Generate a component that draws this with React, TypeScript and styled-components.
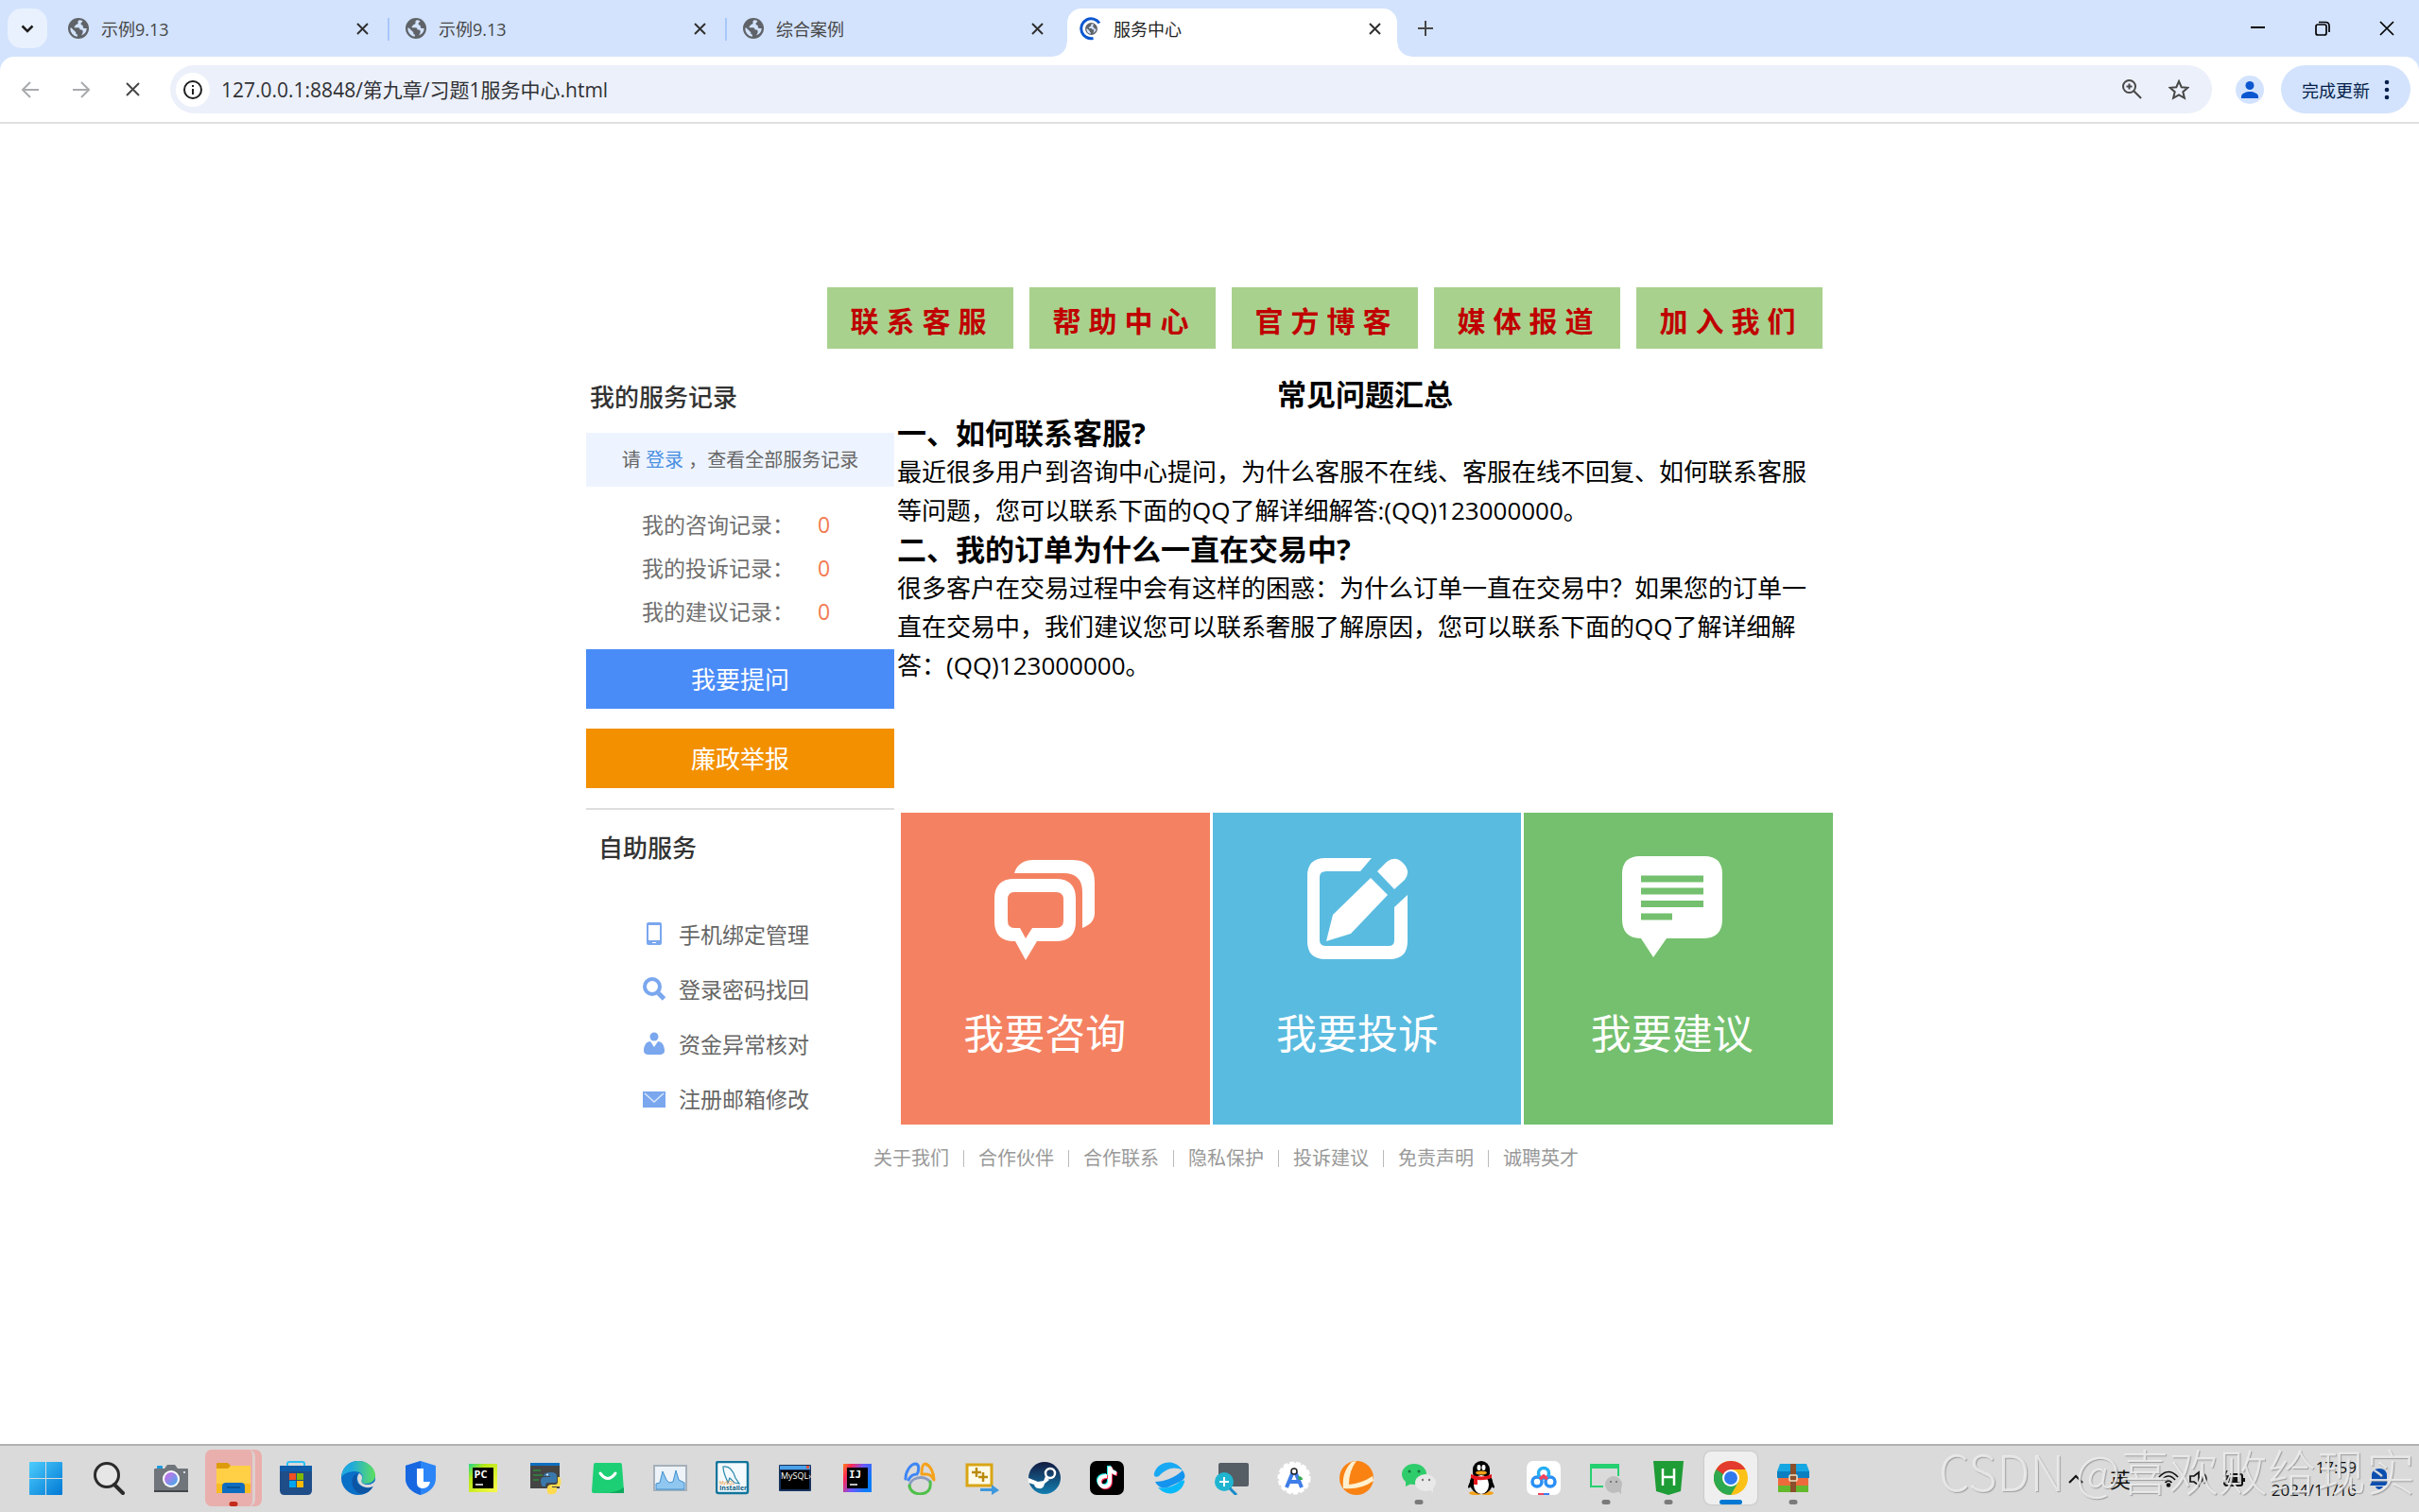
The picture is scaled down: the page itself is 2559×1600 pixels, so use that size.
import React from "react";
import styled, { createGlobalStyle } from "styled-components";

const sans = `"Open Sans", "Noto Sans CJK SC", sans-serif`;

const GlobalStyle = createGlobalStyle`
  *, *::before, *::after { box-sizing: border-box; }
  body { margin: 0; background: #fff; font-family: ${sans}; color: #000; }
  h1, h2, h3, p, ul { margin: 0; padding: 0; }
  ul { list-style: none; }
  a { color: inherit; text-decoration: none; }
  button, input { font: inherit; color: inherit; border: 0; padding: 0; background: none; }
  svg { display: block; }
`;

const Screen = styled.div`
  min-height: 100vh;
  display: flex;
  flex-direction: column;
`;

/* ---------- browser frame ---------- */

const BrowserHeader = styled.header`
  background: #d3e3fd;
`;

const TabStrip = styled.div`
  height: 60px;
  display: flex;
  align-items: flex-start;
  padding-left: 8px;
`;

const TabSearch = styled.button`
  width: 42px;
  height: 42px;
  margin: 9px 4px 0 0;
  border-radius: 15px;
  background: #e9f1fe;
  display: grid;
  place-items: center;
`;

const Tabs = styled.div`
  display: flex;
`;

const TabSlot = styled.div<{ $divider?: boolean }>`
  position: relative;
  width: 357px;
  padding: 9px 4px 0;
  &::after {
    content: "";
    display: ${(p) => (p.$divider ? "block" : "none")};
    position: absolute;
    right: -1px;
    top: 19px;
    width: 2px;
    height: 24px;
    background: #a8c7fa;
  }
`;

const Tab = styled.div<{ $active?: boolean }>`
  position: relative;
  height: 51px;
  padding: 0 14px 9px;
  display: flex;
  align-items: center;
  gap: 13px;
  font-size: 18px;
  color: ${(p) => (p.$active ? "#1f1f1f" : "#474747")};
  background: ${(p) => (p.$active ? "#fff" : "transparent")};
  border-radius: 15px 15px 0 0;
  &::before, &::after {
    content: "";
    display: ${(p) => (p.$active ? "block" : "none")};
    position: absolute;
    bottom: 0;
    width: 15px;
    height: 15px;
  }
  &::before {
    left: -15px;
    background: radial-gradient(circle at 0 0, transparent 14px, #fff 15px);
  }
  &::after {
    right: -15px;
    background: radial-gradient(circle at 100% 0, transparent 14px, #fff 15px);
  }
`;

const TabTitle = styled.span`
  flex: 1;
`;

const TabClose = styled.button`
  width: 20px;
  height: 20px;
  display: grid;
  place-items: center;
`;

const NewTab = styled.button`
  width: 36px;
  height: 42px;
  margin: 9px 0 0 8px;
  display: grid;
  place-items: center;
`;

const WindowControls = styled.div`
  margin-left: auto;
  display: flex;
`;

const WindowButton = styled.button`
  width: 68px;
  height: 60px;
  display: grid;
  place-items: center;
`;

const Toolbar = styled.div`
  display: flex;
  align-items: center;
  padding: 9px 9px 9px 5px;
  background: #fff;
  border-radius: 15px 15px 0 0;
  border-bottom: 2px solid #dfe0e2;
`;

const ToolButton = styled.button<{ $w: number }>`
  width: ${(p) => p.$w}px;
  height: 50px;
  display: grid;
  place-items: center;
`;

const Omnibox = styled.div`
  flex: 1;
  height: 51px;
  margin-left: 13px;
  padding: 0 11px 0 6px;
  display: flex;
  align-items: center;
  border-radius: 26px;
  background: #ecf0fa;
`;

const SiteInfo = styled.button`
  width: 36px;
  height: 36px;
  border-radius: 50%;
  background: #fff;
  display: grid;
  place-items: center;
`;

const UrlInput = styled.input`
  flex: 1;
  height: 36px;
  padding: 0 0 2px 12px;
  font-size: 21px;
  color: #303134;
  outline: none;
`;

const Profile = styled.button`
  width: 30px;
  height: 30px;
  margin: 0 18px 0 25px;
  border-radius: 50%;
  background: #d3e3fd;
  overflow: hidden;
`;

const UpdateButton = styled.button`
  height: 51px;
  padding: 0 15px 0 22px;
  display: flex;
  align-items: center;
  gap: 8px;
  border-radius: 26px;
  background: #d3e3fd;
  color: #041e49;
  font-size: 18px;
`;

/* ---------- web page ---------- */

const Viewport = styled.main`
  flex: 1;
  padding: 173px 24px 40px;
`;

const Page = styled.div`
  max-width: 1319px;
  margin: 0 auto;
`;

const TopNav = styled.nav`
  display: flex;
  gap: 17px;
  padding-left: 255px;
`;

const TopNavLink = styled.a`
  width: 197px;
  height: 65px;
  padding: 2px 0 0 4px;
  display: flex;
  align-items: center;
  justify-content: center;
  background: #a9d18e;
  color: #c00000;
  font-size: 30px;
  font-weight: 700;
  letter-spacing: 8px;
`;

const Columns = styled.div`
  display: grid;
  grid-template-columns: 326px 1fr;
  gap: 3px;
  margin-top: 28px;
`;

const SideTitle = styled.h2<{ $indent: number }>`
  padding-left: ${(p) => p.$indent}px;
  font-size: 26px;
  line-height: 46px;
  font-weight: 500;
  color: #333;
`;

const LoginNotice = styled.p`
  margin-top: 15px;
  height: 57px;
  line-height: 57px;
  text-align: center;
  font-size: 20px;
  color: #666;
  background: #eef4ff;
  a { color: #4a90e2; }
`;

const Records = styled.ul`
  margin: 17px 0;
  padding-left: 59px;
`;

const RecordRow = styled.li`
  display: grid;
  grid-template-columns: 186px auto;
  font-size: 23px;
  line-height: 46px;
  color: #707070;
`;

const RecordCount = styled.span`
  color: #f27b52;
`;

const SideButton = styled.button<{ $color: string }>`
  display: block;
  width: 100%;
  height: 63px;
  margin-bottom: 21px;
  padding-bottom: 2px;
  font-size: 26px;
  color: #fff;
  background: ${(p) => p.$color};
`;

const SelfService = styled.section`
  padding-top: 17px;
  border-top: 2px solid #dedede;
`;

const ServiceList = styled.ul`
  margin-top: 39px;
  padding-left: 58px;
`;

const ServiceLink = styled.a`
  display: flex;
  align-items: center;
  gap: 12px;
  height: 58px;
  font-size: 23px;
  color: #666;
`;

const Faq = styled.article`
  font-size: 26px;
  line-height: 41px;
`;

const FaqTitle = styled.h1`
  font-size: 31px;
  line-height: 41px;
  text-align: center;
`;

const FaqQuestion = styled.h2`
  font-size: 31px;
  line-height: 41px;
`;

const FaqAnswer = styled.p`
  padding-right: 8px;
`;

const Cards = styled.div`
  display: grid;
  grid-template-columns: repeat(3, 1fr);
  gap: 3px;
  margin-top: 135px;
  padding-left: 4px;
`;

const Card = styled.a<{ $color: string; $inset: number }>`
  height: 330px;
  padding-top: 46px;
  padding-right: ${(p) => p.$inset}px;
  display: flex;
  flex-direction: column;
  align-items: center;
  gap: 38px;
  background: ${(p) => p.$color};
  color: #fff;
  font-size: 43px;
  line-height: 60px;
`;

const Footer = styled.footer`
  margin-top: 20px;
  padding-left: 304px;
  display: flex;
  font-size: 20px;
  line-height: 30px;
  color: #999;
`;

const FooterLink = styled.a`
  display: flex;
  align-items: center;
  &:not(:last-child)::after {
    content: "";
    width: 1px;
    height: 18px;
    margin: 0 15px;
    background: #bbb;
  }
`;

/* ---------- taskbar ---------- */

const Taskbar = styled.footer`
  position: relative;
  height: 72px;
  display: flex;
  padding: 0 18px 0 16px;
  background: #dadada;
  border-top: 2px solid #b0b0b0;
`;

const Apps = styled.div`
  display: flex;
`;

const AppButton = styled.button<{ $state?: string }>`
  position: relative;
  width: ${(p) => (p.$state === "alert" ? 60 : 56)}px;
  height: ${(p) => (p.$state === "alert" ? 60 : 56)}px;
  margin: ${(p) => (p.$state === "alert" ? "4px 3px" : "6px 5px")};
  display: grid;
  place-items: center;
  border-radius: 7px;
  background: ${(p) =>
    p.$state === "alert" ? "#e9afac" : p.$state === "active" ? "#efefef" : "transparent"};
  box-shadow: ${(p) => (p.$state === "active" ? "0 0 2px #aaa" : "none")};
  &::before {
    content: "";
    display: ${(p) => (p.$state === "alert" ? "block" : "none")};
    position: absolute;
    inset: 0 7px 0 0;
    border-right: 3px solid #dcd0cf;
    border-radius: 7px;
  }
  &::after {
    content: "";
    display: ${(p) => (p.$state ? "block" : "none")};
    position: absolute;
    bottom: 0;
    left: 50%;
    transform: translateX(-50%);
    width: ${(p) => (p.$state === "active" ? 24 : 9)}px;
    height: 5px;
    border-radius: 3px;
    background: ${(p) =>
      p.$state === "active" ? "#0078d4" : p.$state === "alert" ? "#c42b1c" : "#7a7a7a"};
  }
`;

const Tray = styled.div`
  margin-left: auto;
  display: flex;
  align-items: center;
  color: #111;
`;

const TrayButton = styled.button<{ $w: number }>`
  width: ${(p) => p.$w}px;
  height: 60px;
  display: grid;
  place-items: center;
  font-size: 22px;
  line-height: 30px;
`;

const StatusButton = styled.button`
  height: 60px;
  padding-left: 12px;
  display: grid;
  grid-template-columns: 32px 32px 42px;
  place-items: center;
`;

const Clock = styled.button`
  width: 109px;
  text-align: right;
  font-size: 17px;
  line-height: 24px;
`;

const Watermark = styled.div`
  position: absolute;
  right: 4px;
  top: 0;
  font-family: "Noto Sans CJK SC", sans-serif;
  font-size: 52px;
  font-weight: 300;
  line-height: 52px;
  white-space: nowrap;
  color: rgba(240, 240, 240, 0.85);
  text-shadow: 1px 1px 1px rgba(120, 120, 120, 0.6);
  pointer-events: none;
`;

/* ---------- drawings ---------- */

const Globe = ({ size = 22 }: { size?: number }) => (
  <svg width={size} height={size} viewBox="0 0 22 22">
    <circle cx="11" cy="11" r="11" fill="#5f6368" />
    <path d="M12 2.200c-1.400.4-1.800 1.600-1.500 2.800.3 1.200-.6 1.600-1.800 1.900-1 .3-.7 1.500-1.700 1.800-.9.300-.6 1.300.4 1.500h3.400c1.400 0 1.800 1.200 1.800 2.200h1.600c1.200 0 1.600 1.200 1.400 2.600-.2 1.400-.9 2.600-1.600 3.500A8.900 8.900 0 0 0 19.800 11h-2.300c-1.500 0-2-1-1.700-2.200.2-.8-.4-1-1.300-1.300-1.500-.5-1.200-2.400.3-2.900l.6-1.500A9 9 0 0 0 12 2.200zM2.300 10.500a8.900 8.900 0 0 0 7.600 9.300v-2.300c-1.500-.3-1.900-1.200-1.600-2.300l-4.800-4.700z" fill="#d3e3fd" />
  </svg>
);

const LoadingGlobe = () => (
  <svg width="22" height="22" viewBox="0 0 22 22" overflow="visible">
    <g transform="translate(5 5)"><Globe size={13} /></g>
    <path d="M20 5.500A10.500 10.500 0 1 0 13.500 21.500" fill="none" stroke="#0b57d0" strokeWidth="3" />
  </svg>
);

const Cross = ({ size = 11, color = "#303030", w = 2 }: { size?: number; color?: string; w?: number }) => (
  <svg width={size} height={size} viewBox={`0 0 ${size} ${size}`} stroke={color} strokeWidth={w}>
    <path d={`M1 1L${size - 1} ${size - 1}M${size - 1} 1L1 ${size - 1}`} />
  </svg>
);

const Arrow = ({ flip }: { flip?: boolean }) => (
  <svg width="18" height="18" viewBox="0 0 18 18" fill="none" stroke="#a9abae" strokeWidth="2">
    <path d={flip ? "M0 9h16M9 1l8 8-8 8" : "M18 9H2M9 1L1 9l8 8"} />
  </svg>
);

const ServiceIcons = [
  <svg key="phone" width="28" height="28" viewBox="0 0 28 28">
    <rect x="6" y="2" width="16" height="24" rx="2" fill="#7aa7ee" />
    <rect x="8" y="5" width="12" height="16" fill="#fff" />
    <rect x="12" y="23" width="4" height="1" fill="#fff" />
  </svg>,
  <svg key="find" width="28" height="28" viewBox="0 0 28 28" fill="none" stroke="#7aa7ee">
    <circle cx="12" cy="12" r="8" strokeWidth="4" />
    <path d="M18.500 19l6 6" strokeWidth="5" />
  </svg>,
  <svg key="person" width="28" height="28" viewBox="0 0 28 28" fill="#7aa7ee">
    <circle cx="14" cy="7" r="4.500" />
    <path d="M3 22c0-6 3-10 7-10l4 6 4-6c4 0 7 4 7 10 0 3-3 4-5 4H8c-2 0-5-1-5-4z" />
  </svg>,
  <svg key="mail" width="28" height="28" viewBox="0 0 28 28">
    <rect x="2" y="7" width="24" height="17" fill="#7aa7ee" />
    <path d="M4 9l10 9 10-9" fill="none" stroke="#dce8fb" strokeWidth="1.500" />
  </svg>,
];

const ConsultIcon = () => (
  <svg width="108" height="120" viewBox="0 0 108 120">
    <path d="M22 18C25 8 33 4 42 4H84Q107 4 107 28V60C107 68 102 73 94 76V38Q94 18 74 18Z" fill="#fff" />
    <path fillRule="evenodd" d="M22 24H66Q87 24 87 45V69Q87 90 66 90H46L34 110L23 90H22Q1 90 1 69V45Q1 24 22 24ZM22 38Q15 38 15 46V68Q15 76 22 76H28L34 87L41 76H66Q74 76 74 68V46Q74 38 66 38Z" fill="#fff" />
  </svg>
);

const ComplainIcon = () => (
  <svg width="108" height="120" viewBox="0 0 108 120" fill="#fff">
    <path d="M69 2H20Q1 2 1 21V90Q1 109 20 109H88Q107 109 107 90V41L93 54V89Q93 95 87 95H21Q14 95 14 89V22Q14 16 21 16H57Z" />
    <path d="M68 23L86 41L47 82L21 90L28 62Z" />
    <path d="M75 16L85 6Q94-1 102 7Q111 16 104 25L93 35Z" />
  </svg>
);

const SuggestIcon = () => (
  <svg width="108" height="120" viewBox="0 0 108 120">
    <path d="M20 0H88Q107 0 107 19V67Q107 86 88 87H48L34 107L21 87H20Q1 86 1 67V19Q1 0 20 0Z" fill="#fff" />
    <path d="M21 24H87M21 37H87M21 50.500H87M21 64H54" stroke="#74c06e" strokeWidth="7" />
  </svg>
);

const I = ({ children }: { children: React.ReactNode }) => (
  <svg width="36" height="36" viewBox="0 0 36 36">{children}</svg>
);

type AppItem = { name: string; state?: string; icon: React.ReactNode };

const apps: AppItem[] = [
  { name: "开始", icon: <I><defs><linearGradient id="win" x1="0" y1="0" x2="1" y2="1"><stop offset="0" stopColor="#4ccdfd" /><stop offset="1" stopColor="#0078d4" /></linearGradient></defs><path d="M0 2q0-1 1-1h16v17H0zM18 1h16q1 0 1 1v16H18zM0 19h17v17H1q-1 0-1-1zM18 19h17v16q0 1-1 1H18z" fill="url(#win)" /></I> },
  { name: "搜索", icon: <I><circle cx="16" cy="15" r="12.500" fill="#e6e6e6" stroke="#2b2b2b" strokeWidth="3" /><path d="M24 25l9 9" stroke="#2b2b2b" strokeWidth="4" strokeLinecap="round" /></I> },
  { name: "相机", icon: <I><rect x="3" y="5" width="6" height="4" rx="1" fill="#1a9be0" /><path d="M1 8h10l3-4h8l3 4h10q1 0 1 1v23q0 1-1 1H1q-1 0-1-1V9q0-1 1-1z" fill="#70757b" /><path d="M0 31h36v2H0z" fill="#43474b" /><circle cx="18" cy="19" r="9" fill="#fff" /><defs><linearGradient id="lens" x1="0" y1="0" x2="1" y2="1"><stop offset="0.3" stopColor="#b07be8" /><stop offset="1" stopColor="#35b1ec" /></linearGradient></defs><circle cx="18" cy="19" r="7" fill="url(#lens)" /><circle cx="32" cy="12" r="1" fill="#fff" /></I> },
  { name: "文件资源管理器", state: "alert", icon: <I><path d="M0 3q0-1 1-1h11l3 3v5H0z" fill="#dd9b0c" /><path d="M0 8h12l3-3h20q1 0 1 1v28H0z" fill="#ffcf45" /><path d="M0 24h36v10H0z" fill="#f9bb1f" /><path d="M6 34V27q0-4 4-4h16q4 0 4 4v7z" fill="#0f6cc0" /><path d="M11 28h14" stroke="#0a4a86" strokeWidth="1.500" /></I> },
  { name: "Microsoft Store", icon: <I><path d="M9 8V3q0-2 2-2h14q2 0 2 2v5" fill="none" stroke="#2cc0f5" strokeWidth="2" /><path d="M1 5h34v26q0 5-5 5H6q-5 0-5-5z" fill="#1e4d88" /><path d="M1 5h34v6H1z" fill="#0f5ca8" /><path d="M11 13h7v7h-7z" fill="#f25022" /><path d="M19 13h7v7h-7z" fill="#7fba00" /><path d="M11 21h7v7h-7z" fill="#00a4ef" /><path d="M19 21h7v7h-7z" fill="#ffb900" /></I> },
  { name: "Microsoft Edge", icon: <I><defs><linearGradient id="edge" x1="0" y1="0" x2="1" y2="0"><stop offset="0.300" stopColor="#1fa9dd" /><stop offset="1" stopColor="#5fe05e" /></linearGradient></defs><circle cx="18" cy="18" r="18" fill="#0a6fc7" /><path d="M0 17C1 7 8 0 18 0c11 0 18 8 18 15 0 6-5 9-9 9-5 0-7-2-5-5 2-4-2-8-7-8-6 0-12 2-15 6z" fill="url(#edge)" /><path d="M14 15c-5 5-3 17 7 20 6 0 11-4 13-9-8 4-19 1-18-8 0-2 1-4 2-5z" fill="#0c55a4" /><path d="M19 13c3 2 4 4 2.500 7-1 3 2 5 7 5 3 0 6-2 7.500-4v5l-2 1c-7 3-17 0-17-9q0-3 2-5z" fill="#dadada" /></I> },
  { name: "电脑管家", icon: <I><path d="M18 0l16 5v13c0 9-6 15-16 18C8 33 2 27 2 18V5z" fill="#2b85f7" /><path d="M18 0L2 5v13c0 9 6 15 16 18z" fill="#1767e0" /><path d="M14 8h7v14h7q-1 6-7 7-7 0-7-6z" fill="#fff" /></I> },
  { name: "PyCharm", icon: <I><defs><linearGradient id="pc" x1="0" y1="0" x2="1" y2="1"><stop offset="0" stopColor="#21d789" /><stop offset="0.300" stopColor="#b6e815" /><stop offset="1" stopColor="#fcf84a" /></linearGradient></defs><path d="M3 3h30v30H3z" fill="url(#pc)" /><path d="M7 7h22v22H7z" fill="#000" /><text x="8.500" y="18" fontSize="11" fontWeight="700" fill="#fff">PC</text><path d="M10 25h8" stroke="#fff" strokeWidth="1.500" /></I> },
  { name: "Python", icon: <I><path d="M2 2h31v27H2z" fill="#444" /><path d="M2 2h31v3H2z" fill="#0e6fc0" /><path d="M5 10h8M5 15h10M5 20h6" stroke="#2f8a3a" strokeWidth="1.500" /><path d="M13 21q0-4 4-4h6v-1h-7q0-4 8-4 6 0 6 4v5q0 2-3 2h-6q-3 0-3 4h-3q-2-2-2-6z" fill="#3a78ac" /><circle cx="20" cy="14.500" r="1" fill="#fff" /><path d="M31 17h2q3 5 0 10h-8v1h5v4q-2 4-8 3-3-1-2-7 1-3 4-3h4q3 0 3-3z" fill="#ffdb4d" /></I> },
  { name: "应用商店", icon: <I><path d="M5 2h26q2 0 2 3l2 26q0 2-2 3H3q-2 0-2-2L3 4q0-2 2-2z" fill="#1dcf74" /><path d="M35 28v6H12q15 0 23-6z" fill="#0da95c" /><path d="M10 13q8 11 16 0" fill="none" stroke="#fff" strokeWidth="3" strokeLinecap="round" /></I> },
  { name: "性能监视器", icon: <I><rect x="1" y="5" width="34" height="26" fill="#edf3f8" stroke="#a5b0bb" strokeWidth="2" /><path d="M3 30V24l4-1 3-12 4 9 3 3 4-1 3-12 3 10 6 3v7z" fill="#8fc7f0" stroke="#3f8fd0" strokeWidth="1" /></I> },
  { name: "MySQL Installer", icon: <I><rect x="1" y="1" width="33" height="33" rx="2" fill="#f4fafd" stroke="#11759c" strokeWidth="2.500" /><path d="M8 6c7-1 11 5 13 12l4 6-5-1-5-5-2 5c-2-6-5-10-5-17z" fill="none" stroke="#2a88ad" strokeWidth="1.200" /><text x="4" y="31" fontSize="7" fontWeight="700" fill="#0d5d80">Installer</text><text x="4" y="25" fontSize="5" fill="#e88a1a">MySQL</text></I> },
  { name: "MySQL Command Line", icon: <I><rect x="1" y="4" width="34" height="28" rx="1" fill="#16325c" /><path d="M2 5h32v4H2z" fill="#4aa0e8" /><path d="M30 5h3v3h-3z" fill="#e0523a" /><path d="M3 10h30v20H3z" fill="#000" /><text x="3" y="19" fontSize="9" fill="#fff">MySQL›</text></I> },
  { name: "IntelliJ IDEA", icon: <I><defs><linearGradient id="ij" x1="0" y1="0" x2="1" y2="0.500"><stop offset="0" stopColor="#fc801d" /><stop offset="0.250" stopColor="#fe2857" /><stop offset="0.600" stopColor="#6b57ff" /><stop offset="1" stopColor="#087cfa" /></linearGradient></defs><path d="M3 3h30v30H3z" fill="url(#ij)" /><path d="M7 7h22v22H7z" fill="#000" /><text x="9" y="18" fontSize="11" fontWeight="700" fontFamily="DejaVu Sans Mono" fill="#fff">IJ</text><path d="M10 25h8" stroke="#fff" strokeWidth="1.500" /></I> },
  { name: "Navicat", icon: <I><g fill="none" strokeWidth="3" strokeLinecap="round" strokeLinejoin="round"><path d="M3 19C3 11 8 3 14 3c4 1 3 8 1 11-4 0-7 2-9 6" stroke="#3f86f5" /><path d="M20 14c0-6 1-11 4-11 5 2 9 9 9 17-2-4-5-6-8-6z" stroke="#f5a21b" /><path d="M7 27a12 10 0 0 1 22-5" stroke="#8b9cc0" /><path d="M29 22q2 12-11 13-10-1-11-9" stroke="#4fc04a" /></g></I> },
  { name: "工具", icon: <I><rect x="2" y="4" width="26" height="22" fill="#fffbe8" stroke="#d9a514" strokeWidth="3" /><path d="M12 7v10M7 12h10M19 12v10M14 17h10" stroke="#b98a0a" strokeWidth="2.500" /><path d="M16 29h12v-4l8 6-8 5v-4H16z" fill="#3f98dc" /></I> },
  { name: "Steam", icon: <I><defs><linearGradient id="steam" x1="0" y1="0" x2="0" y2="1"><stop offset="0" stopColor="#131b41" /><stop offset="1" stopColor="#137eb0" /></linearGradient></defs><circle cx="18" cy="18" r="17" fill="url(#steam)" /><circle cx="24" cy="13" r="5" fill="none" stroke="#fff" strokeWidth="2.500" /><path d="M1 18l10 4 6-1 2-5 4 4-5 4q-1 6-6 5-4 0-5-4l-6-2z" fill="#fff" /></I> },
  { name: "抖音", icon: <I><rect width="36" height="36" rx="7" fill="#000" /><g fill="none" strokeWidth="4"><path d="M18 16q-8 0-8 6 1 6 7 5 4-1 4-6V6q1 6 7 7" stroke="#25f4ee" transform="translate(-1 -1)" /><path d="M18 16q-8 0-8 6 1 6 7 5 4-1 4-6V6q1 6 7 7" stroke="#fe2c55" transform="translate(1 1)" /><path d="M18 16q-8 0-8 6 1 6 7 5 4-1 4-6V6q1 6 7 7" stroke="#fff" /></g></I> },
  { name: "浏览器", icon: <I><path d="M2 13C6 0 24-3 32 10c-9-5-17-2-25 6-3 2-6 0-5-3z" fill="#18a9f4" /><path d="M32 10c4 6 3 9-3 12L16 28c-6 2-10-1-13-6 9 0 21-4 29-12z" fill="#1494ee" /><path d="M34 22C31 35 15 39 6 28c10 2 17-2 23-6 3-2 6-2 5 0z" fill="#08b9fa" /></I> },
  { name: "放大镜", icon: <I><rect x="4" y="2" width="32" height="25" rx="2" fill="#555d65" /><circle cx="10" cy="22" r="10" fill="#1fb5d0" /><path d="M16 29l7 7" stroke="#178bc8" strokeWidth="3" /><path d="M10 17v10M5 22h10" stroke="#fff" strokeWidth="2" /></I> },
  { name: "Android Studio", icon: <I><circle cx="18" cy="18" r="16" fill="#fff" stroke="#fff" strokeWidth="3" strokeDasharray="5 2" /><path d="M10 28l7-17h2l7 17M12 22h12" fill="none" stroke="#3f7de8" strokeWidth="4" /><circle cx="18" cy="11" r="3" fill="#fff" stroke="#222" strokeWidth="1.500" /><path d="M22 16q5 0 5 4h-4z" fill="#34a853" /></I> },
  { name: "雷神", icon: <I><circle cx="18" cy="18" r="18" fill="#f98213" /><path d="M13 1l5-1Q10 10 10 25q13-1 25-9l1 5Q22 31 4 29 2 12 13 1z" fill="#fff0cf" /></I> },
  { name: "微信", state: "running", icon: <I><ellipse cx="13" cy="14" rx="13" ry="11" fill="#2fcc6b" /><path d="M4 20l0 7 8-4z" fill="#2fcc6b" /><circle cx="8" cy="11" r="1.500" fill="#14753a" /><circle cx="18" cy="11" r="1.500" fill="#14753a" /><ellipse cx="25" cy="23" rx="11" ry="9" fill="#e9e9e9" /><path d="M29 29l4 5V27z" fill="#e9e9e9" /><circle cx="22" cy="20" r="1.200" fill="#777" /><circle cx="29" cy="20" r="1.200" fill="#777" /></I> },
  { name: "QQ", icon: <I><ellipse cx="12" cy="34" rx="7" ry="2" fill="#f5a31a" /><ellipse cx="24" cy="34" rx="7" ry="2" fill="#f5a31a" /><path d="M8 17L4 27q0 4 4-1zM28 17l4 10q0 4-4-1z" fill="#000" /><ellipse cx="18" cy="23" rx="12" ry="12" fill="#000" /><ellipse cx="18" cy="25" rx="8" ry="10" fill="#fff" /><path d="M9 14V9a9 9 0 0 1 18 0v5z" fill="#000" /><ellipse cx="15.500" cy="7" rx="2" ry="3" fill="#fff" /><ellipse cx="20.500" cy="7" rx="2" ry="3" fill="#fff" /><ellipse cx="18" cy="12.500" rx="6" ry="2" fill="#f5a31a" /><path d="M7 14q11 5 22 0v4q-8 3-15 2v5h-4v-6l-3-1z" fill="#e8171b" /></I> },
  { name: "百度网盘", icon: <I><rect width="36" height="36" rx="7" fill="#fff" /><g fill="none" strokeWidth="3.500"><circle cx="11" cy="22" r="5" stroke="#2a8ff5" /><circle cx="25" cy="22" r="5" stroke="#2a8ff5" /><circle cx="18" cy="13" r="5.500" stroke="#25aef3" /><path d="M14 19l4-3 4 3" stroke="#f2415f" /></g><path d="M12 34h6v2h-6z" fill="#f2415f" /><path d="M18 34h6v2h-6z" fill="#3c7bf6" /></I> },
  { name: "微信窗口", state: "running", icon: <I><path d="M31 16V5H2v22h13" fill="none" stroke="#25d070" strokeWidth="2" /><path d="M1 3h31v5H1z" fill="#25d070" /><circle cx="26" cy="25" r="9" fill="#bdbdbd" /><path d="M29 31l5 4v-7z" fill="#bdbdbd" /><circle cx="23" cy="22" r="1" fill="#666" /><circle cx="29" cy="22" r="1" fill="#666" /></I> },
  { name: "HBuilder X", state: "running", icon: <I><path d="M2 0h32l-3 32-13 4-13-4z" fill="#1e9c35" /><path d="M12 8v18M24 8v18M12 17h12" stroke="#fff" strokeWidth="2.500" /></I> },
  { name: "Google Chrome", state: "active", icon: <I><circle cx="18" cy="18" r="18" fill="#fbc116" /><path d="M2.400 9A18 18 0 0 0 18 36l7.800-13.500-15.600 0z" fill="#2da94f" /><path d="M2.400 9L10.200 22.500 18 9z" fill="#2da94f" /><path d="M2.400 9A18 18 0 0 1 33.600 9H18l-8 8z" fill="#e33b2e" /><path d="M2.400 9l7.800 13.500L10 14z" fill="#2da94f" /><circle cx="18" cy="18" r="9" fill="#fff" /><circle cx="18" cy="18" r="7" fill="#3079ed" /></I> },
  { name: "压缩软件", state: "running", icon: <I><path d="M4 3h28l3 8v6H1v-6z" fill="#16a7e2" /><path d="M1 11h34v7H1z" fill="#0c7fc0" /><path d="M2 18h32v8H2z" fill="#ee6a3c" /><path d="M2 26h32v7H2z" fill="#64b82d" /><path d="M15 3h6v30h-6z" fill="#8a4f2b" /><rect x="14" y="15" width="8" height="6" rx="1" fill="none" stroke="#f2e3c8" strokeWidth="1.500" /></I> },
];

const tabs = [
  { title: "示例9.13", divider: true },
  { title: "示例9.13", divider: true },
  { title: "综合案例" },
  { title: "服务中心", active: true },
];

const navLinks = ["联系客服", "帮助中心", "官方博客", "媒体报道", "加入我们"];
const records = ["我的咨询记录：", "我的投诉记录：", "我的建议记录："];
const services = ["手机绑定管理", "登录密码找回", "资金异常核对", "注册邮箱修改"];
const cards = [
  { label: "我要咨询", color: "#f48262", inset: 22, icon: <ConsultIcon /> },
  { label: "我要投诉", color: "#5abbe0", inset: 20, icon: <ComplainIcon /> },
  { label: "我要建议", color: "#74c06e", inset: 14, icon: <SuggestIcon /> },
];
const footerLinks = ["关于我们", "合作伙伴", "合作联系", "隐私保护", "投诉建议", "免责声明", "诚聘英才"];

export default function App() {
  return (
    <Screen>
      <GlobalStyle />
      <BrowserHeader>
        <TabStrip>
          <TabSearch aria-label="搜索标签页">
            <svg width="14" height="9" viewBox="0 0 14 9" fill="none" stroke="#1f1f1f" strokeWidth="2.500"><path d="M1.500 1.500L7 7l5.500-5.500" /></svg>
          </TabSearch>
          <Tabs>
            {tabs.map((t, i) => (
              <TabSlot key={i} $divider={t.divider}>
                <Tab $active={t.active}>
                  {t.active ? <LoadingGlobe /> : <Globe />}
                  <TabTitle>{t.title}</TabTitle>
                  <TabClose aria-label="关闭标签页"><Cross size={13} /></TabClose>
                </Tab>
              </TabSlot>
            ))}
          </Tabs>
          <NewTab aria-label="新标签页">
            <svg width="16" height="16" viewBox="0 0 16 16" stroke="#474747" strokeWidth="2"><path d="M8 0v16M0 8h16" /></svg>
          </NewTab>
          <WindowControls>
            <WindowButton aria-label="最小化">
              <svg width="16" height="16" viewBox="0 0 16 16" stroke="#000" strokeWidth="2"><path d="M0 7h15" /></svg>
            </WindowButton>
            <WindowButton aria-label="还原">
              <svg width="16" height="16" viewBox="0 0 16 16" fill="none" stroke="#000" strokeWidth="1.700"><rect x="1" y="4" width="11" height="11" rx="2" /><path d="M4 1.500h7q4 0 4 4V12" /></svg>
            </WindowButton>
            <WindowButton aria-label="关闭"><Cross size={16} color="#000" w={1.7} /></WindowButton>
          </WindowControls>
        </TabStrip>
        <Toolbar>
          <ToolButton $w={54} aria-label="后退"><Arrow /></ToolButton>
          <ToolButton $w={54} aria-label="前进"><Arrow flip /></ToolButton>
          <ToolButton $w={54} aria-label="停止"><Cross size={15} color="#474747" /></ToolButton>
          <Omnibox>
            <SiteInfo aria-label="网站信息">
              <svg width="20" height="20" viewBox="0 0 20 20" fill="none" stroke="#1f1f1f" strokeWidth="2"><circle cx="10" cy="10" r="9" /><path d="M10 9v6M10 5v2" /></svg>
            </SiteInfo>
            <UrlInput aria-label="地址栏" defaultValue="127.0.0.1:8848/第九章/习题1服务中心.html" />
            <ToolButton $w={49} aria-label="缩放">
              <svg width="21" height="21" viewBox="0 0 21 21" fill="none" stroke="#474747" strokeWidth="2"><circle cx="7.500" cy="7.500" r="6.500" /><path d="M12.500 12.500l7.500 7.500M7.500 4.500v6M4.500 7.500h6" /></svg>
            </ToolButton>
            <ToolButton $w={49} aria-label="收藏">
              <svg width="22" height="22" viewBox="0 0 22 22" fill="none" stroke="#474747" strokeWidth="2"><path d="M11 2l2.700 6.200 6.800.6-5.200 4.400 1.600 6.600L11 16.300l-5.900 3.500 1.600-6.600L1.500 8.800l6.800-.6z" /></svg>
            </ToolButton>
          </Omnibox>
          <Profile aria-label="个人资料">
            <svg width="30" height="30" viewBox="0 0 30 30" fill="#0b57d0"><circle cx="15" cy="10.500" r="4.500" /><path d="M6 24v-2c0-3 5-5 9-5s9 2 9 5v2z" /></svg>
          </Profile>
          <UpdateButton>
            完成更新
            <svg width="20" height="22" viewBox="0 0 20 22" fill="#041e49"><circle cx="10" cy="3" r="2.300" /><circle cx="10" cy="11" r="2.300" /><circle cx="10" cy="19" r="2.300" /></svg>
          </UpdateButton>
        </Toolbar>
      </BrowserHeader>

      <Viewport>
        <Page>
          <TopNav>
            {navLinks.map((l) => <TopNavLink key={l} href="#">{l}</TopNavLink>)}
          </TopNav>
          <Columns>
            <aside>
              <SideTitle $indent={4}>我的服务记录</SideTitle>
              <LoginNotice>请 <a href="#">登录</a> ，查看全部服务记录</LoginNotice>
              <Records>
                {records.map((r) => (
                  <RecordRow key={r}><span>{r}</span><RecordCount>0</RecordCount></RecordRow>
                ))}
              </Records>
              <SideButton $color="#4a8cf7">我要提问</SideButton>
              <SideButton $color="#f39000">廉政举报</SideButton>
              <SelfService>
                <SideTitle $indent={13}>自助服务</SideTitle>
                <ServiceList>
                  {services.map((s, i) => (
                    <li key={s}><ServiceLink href="#">{ServiceIcons[i]}{s}</ServiceLink></li>
                  ))}
                </ServiceList>
              </SelfService>
            </aside>
            <div>
              <Faq>
                <FaqTitle>常见问题汇总</FaqTitle>
                <FaqQuestion>一、如何联系客服?</FaqQuestion>
                <FaqAnswer>最近很多用户到咨询中心提问，为什么客服不在线、客服在线不回复、如何联系客服等问题，您可以联系下面的QQ了解详细解答:(QQ)123000000。</FaqAnswer>
                <FaqQuestion>二、我的订单为什么一直在交易中?</FaqQuestion>
                <FaqAnswer>很多客户在交易过程中会有这样的困惑：为什么订单一直在交易中？如果您的订单一直在交易中，我们建议您可以联系奢服了解原因，您可以联系下面的QQ了解详细解答：(QQ)123000000。</FaqAnswer>
              </Faq>
              <Cards>
                {cards.map((c) => (
                  <Card key={c.label} href="#" $color={c.color} $inset={c.inset}>{c.icon}<span>{c.label}</span></Card>
                ))}
              </Cards>
            </div>
          </Columns>
          <Footer>
            {footerLinks.map((l) => <FooterLink key={l} href="#">{l}</FooterLink>)}
          </Footer>
        </Page>
      </Viewport>

      <Taskbar>
        <Apps>
          {apps.map((a) => (
            <AppButton key={a.name} aria-label={a.name} $state={a.state}>{a.icon}</AppButton>
          ))}
        </Apps>
        <Tray>
          <TrayButton $w={48} aria-label="显示隐藏的图标">
            <svg width="16" height="10" viewBox="0 0 16 10" fill="none" stroke="#111" strokeWidth="2"><path d="M1 9l7-7 7 7" /></svg>
          </TrayButton>
          <TrayButton $w={46}>英</TrayButton>
          <StatusButton aria-label="网络、音量和电池">
            <svg width="22" height="18" viewBox="0 0 22 18" fill="none" stroke="#111" strokeWidth="1.700"><path d="M1 7q10-11 20 0M4 10q7-8 14 0M7.500 13q3.500-4 7 0" /><circle cx="11" cy="15.500" r="1.500" fill="#111" /></svg>
            <svg width="22" height="18" viewBox="0 0 22 18" fill="none" stroke="#111" strokeWidth="1.700"><path d="M2 6h4l5-4v14l-5-4H2zM14 6q2 3 0 6M17 4q4 5 0 10" /></svg>
            <svg width="25" height="18" viewBox="0 0 25 18" fill="none" stroke="#111" strokeWidth="2"><path d="M8 4h11q2 0 2 2v8q0 2-2 2H5q-3 0-3-3v-3" /><path d="M23 8v4" /><path d="M8 7h10v6H6z" fill="#111" stroke="none" /><path d="M5 0L2 6h4L4 10" strokeWidth="1.500" /></svg>
          </StatusButton>
          <Clock>17:59<br />2024/11/16</Clock>
          <TrayButton $w={48} aria-label="通知">
            <svg width="22" height="24" viewBox="0 0 22 24" fill="#0a4fb0"><path d="M11 1q8 0 8 8v6l2 4H1l2-4V9q0-8 8-8zM7 20h8q-1 3-4 3t-4-3z" /></svg>
          </TrayButton>
        </Tray>
        <Watermark>CSDN @喜欢败给现实</Watermark>
      </Taskbar>
    </Screen>
  );
}
